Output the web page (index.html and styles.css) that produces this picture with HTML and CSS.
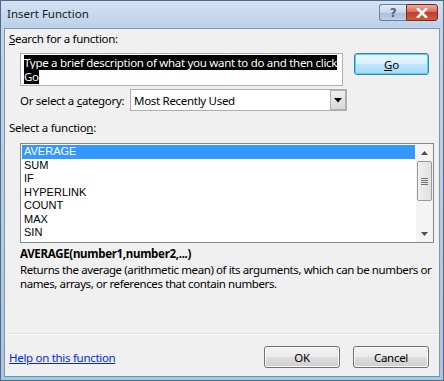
FILE: index.html
```html
<!DOCTYPE html>
<html>
<head>
<meta charset="utf-8">
<link rel="stylesheet" href="styles.css">
</head>
<body>
<div class="window">
  <div class="titlebar">
    <span class="title">Insert Function</span>
    <div class="caption-btns">
      <div class="cbtn help">?</div>
      <div class="cbtn close">
        <svg width="14" height="10" viewBox="0 0 14 10"><path d="M3 1 L11 9 M11 1 L3 9" stroke="#fff" stroke-width="2.6" stroke-linecap="square"/></svg>
      </div>
    </div>
  </div>
  <div class="client">
    <div class="label first"><u>S</u>earch for a function:</div>
    <div class="search-row">
      <div class="textarea"><span class="sel">Type a brief description of what you want to do and then click<br>Go</span></div>
      <div class="btn go"><u>G</u>o</div>
    </div>
    <div class="cat-row">
      <span class="label cat-label">Or select a <u>c</u>ategory:</span>
      <div class="combo">
        <span class="combo-text">Most Recently Used</span>
        <div class="combo-arrow"><svg width="8" height="5" viewBox="0 0 8 5"><path d="M0 0 H8 L4 4.5 Z" fill="#000"/></svg></div>
      </div>
    </div>
    <div class="label fn-label">Select a functio<u>n</u>:</div>
    <div class="listbox">
      <div class="items">
        <div class="item selected">AVERAGE</div>
        <div class="item">SUM</div>
        <div class="item">IF</div>
        <div class="item">HYPERLINK</div>
        <div class="item">COUNT</div>
        <div class="item">MAX</div>
        <div class="item">SIN</div>
      </div>
      <div class="scrollbar">
        <div class="sarrow"><svg width="7" height="4" viewBox="0 0 7 4"><path d="M0 4 H7 L3.5 0 Z" fill="#4d4d4d"/></svg></div>
        <div class="thumb"><span></span><span></span><span></span><span></span></div>
        <div class="track"></div>
        <div class="sarrow"><svg width="7" height="4" viewBox="0 0 7 4"><path d="M0 0 H7 L3.5 4 Z" fill="#4d4d4d"/></svg></div>
      </div>
    </div>
    <div class="syntax">AVERAGE(number1,number2,...)</div>
    <div class="desc">Returns the average (arithmetic mean) of its arguments, which can be numbers or<br>names, arrays, or references that contain numbers.</div>
    <div class="separator"></div>
    <div class="footer">
      <a class="help-link">Help on this function</a>
      <div class="buttons">
        <div class="btn">OK</div>
        <div class="btn">Cancel</div>
      </div>
    </div>
  </div>
</div>
</body>
</html>
```
FILE: styles.css
```css
html, body { margin: 0; padding: 0; }
body { width: 444px; height: 381px; overflow: hidden; background: #fff; }
.window {
  box-sizing: border-box;
  width: 444px; height: 381px;
  background: linear-gradient(180deg, #c2d6ed 0%, #b9cfe8 40%, #aac4e2 100%);
  border: 1px solid #546a84;
  display: flex; flex-direction: column;
  font-family: "Noto Sans", sans-serif;
  white-space: nowrap;
  letter-spacing: -0.3px;
}
.titlebar {
  height: 27px;
  display: flex; align-items: flex-start; justify-content: space-between;
  background: linear-gradient(180deg, #d3e2f3 0%, #c6d9ee 50%, #bcd1ea 100%);
}
.title {
  font-size: 11.5px; color: #1a1a1a;
  margin: 5px 0 0 6px;
  letter-spacing: 0;
}
.caption-btns { display: flex; margin: 3px 5px 0 0; }
.cbtn {
  height: 17px; box-sizing: border-box;
  border: 1px solid #6c7f97;
  display: flex; align-items: center; justify-content: center;
}
.help {
  width: 27px; border-radius: 3px 0 0 3px;
  background: linear-gradient(180deg, #e2ecf7 0%, #c8d8ea 50%, #a9bfd9 51%, #bcd0e6 100%);
  color: #4b6384; font: bold 12px "DejaVu Sans", sans-serif;
  border-right: none;
}
.close {
  width: 32px; border-radius: 0 3px 3px 0;
  border-color: #7d2a22;
  background: linear-gradient(180deg, #e9a99c 0%, #d7705e 45%, #c0402c 50%, #cf5a3a 100%);
}
.client {
  flex: 1;
  margin: 0 3px 3px 3px;
  background: #f0f0f0;
  border: 1px solid #8195ad;
  border-bottom-color: #3fa6c5;
  padding: 0 10px 0 4px;
  font-size: 11.5px; color: #000;
}
.label { font-size: 11.5px; }
.label.first { margin-top: 1px; height: 17px; line-height: 17px; }
.search-row { display: flex; margin: 6px 0 0 11px; align-items: flex-start; }
.textarea {
  box-sizing: border-box;
  width: 327px; height: 33px;
  background: #fff;
  border: 1px solid #abadb3;
  padding: 2px 3px;
  font-size: 11.5px;
  line-height: 14px;
}
.sel { background: #000; color: #fff; }
.btn {
  box-sizing: border-box;
  width: 76px; height: 22px;
  border: 1px solid #707070;
  border-radius: 3px;
  background: linear-gradient(180deg, #f2f2f2 0%, #ebebeb 48%, #dddddd 52%, #cfcfcf 100%);
  box-shadow: inset 0 0 0 1px #fcfcfc;
  display: flex; align-items: center; justify-content: center;
  font-size: 11.5px;
}
.go {
  margin-left: 11px;
  border-color: #3c7fb1;
  box-shadow: inset 0 0 0 1px #48d7fb;
  background: linear-gradient(180deg, #eaf6fd 0%, #d9f0fc 48%, #bee6fd 52%, #a7d9f5 100%);
}
.cat-row { display: flex; align-items: center; margin: 3px 0 0 11px; }
.cat-label { width: 110px; flex: none; }
.combo {
  box-sizing: border-box;
  width: 217px; height: 22px;
  background: #fff;
  border: 1px solid #abadb3;
  display: flex; align-items: center; justify-content: space-between;
}
.combo-text { font-size: 11.5px; margin-left: 3px; }
.combo-arrow {
  box-sizing: border-box;
  width: 16px; height: 20px;
  background: linear-gradient(180deg, #f0f0f0, #d8d8d8);
  border: 1px solid #b0b0b0;
  display: flex; align-items: center; justify-content: center;
}
.fn-label { margin-top: 8px; height: 17px; line-height: 17px; }
.listbox {
  box-sizing: border-box;
  margin: 7px 0 0 11px;
  width: 414px; height: 100px;
  background: #fff;
  border: 1px solid #828790;
  display: flex;
}
.items { flex: 1; padding: 1px 1px 0 1px; }
.item {
  height: 13.5px; line-height: 13.5px;
  font-family: "Liberation Sans", Arial, sans-serif; font-size: 11px;
  letter-spacing: 0;
  padding-left: 2px; color: #000;
}
.item.selected { background: #3399ff; color: #fff; }
.scrollbar {
  width: 17px;
  background: #f4f4f4;
  display: flex; flex-direction: column;
}
.sarrow { height: 17px; display: flex; align-items: center; justify-content: center; }
.thumb {
  box-sizing: border-box;
  height: 40px; margin: 0 1px;
  border: 1px solid #9a9a9a; border-radius: 2px;
  background: linear-gradient(90deg, #f0f0f0, #e0e0e0);
  display: flex; flex-direction: column; align-items: center; justify-content: center; gap: 1px;
}
.thumb span { width: 7px; height: 1px; background: #707070; }
.track { flex: 1; }
.syntax {
  margin: 3px 0 0 11px;
  font-weight: bold; font-size: 11.5px;
  height: 16px; line-height: 16px;
}
.desc {
  margin: 1px 0 0 11px;
  font-size: 11.5px;
  letter-spacing: -0.4px;
  line-height: 14px;
}
.separator {
  margin: 42px -10px 0 0;
  height: 1px; background: #dfdfdf;
  border-bottom: 1px solid #fff;
}
.footer { display: flex; justify-content: space-between; align-items: center; margin-top: 11px; }
.help-link {
  color: #0026ff; text-decoration: underline;
  font-size: 11.5px;
}
.buttons { display: flex; gap: 13px; }
```
